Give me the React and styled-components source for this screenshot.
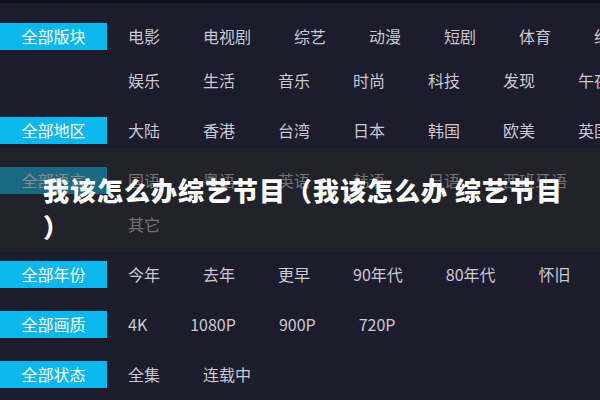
import React from 'react';
import styled, { createGlobalStyle } from 'styled-components';

const GlobalStyle = createGlobalStyle`
  html, body {
    margin: 0;
    padding: 0;
    background: #1c1c2c;
    overflow: hidden;
  }
  * {
    box-sizing: border-box;
  }
`;

const Page = styled.div`
  position: relative;
  width: 600px;
  height: 400px;
  overflow: hidden;
  background: #1c1c2c;
  border-top: 3px solid #10101b;
  padding-top: 20px;
  font-family: "Noto Sans CJK SC", "Noto Sans", sans-serif;
`;

const FilterRow = styled.div`
  display: flex;
  align-items: flex-start;
  margin-bottom: 23px;
`;

const Label = styled.div`
  flex-shrink: 0;
  width: 107px;
  height: 27px;
  line-height: 27px;
  background: #0bb8ee;
  color: #ffffff;
  font-size: 16px;
  text-align: center;
`;

const Lines = styled.div`
  display: flex;
  flex-direction: column;
  gap: 17px;
  margin-left: 21px;
`;

const Line = styled.div`
  display: flex;
  gap: 43px;
  white-space: nowrap;
`;

const Item = styled.a`
  color: #c9c9d3;
  font-size: 16px;
  line-height: 27px;
  text-decoration: none;
  cursor: pointer;
`;

const Band = styled.div`
  position: absolute;
  left: 0;
  right: 0;
  top: 145px;
  height: 104px;
  background: rgba(40, 40, 42, 0.55);
  padding: 24px 0 0 43px;
`;

const Title = styled.h1`
  width: 532px;
  margin: 0;
  color: #ffffff;
  font-size: 26px;
  font-weight: 900;
  line-height: 36px;
  letter-spacing: 1px;
  line-break: anywhere;
`;

const filters = [
  {
    label: '全部版块',
    lines: [
      ['电影', '电视剧', '综艺', '动漫', '短剧', '体育', '纪录片'],
      ['娱乐', '生活', '音乐', '时尚', '科技', '发现', '午夜'],
    ],
  },
  { label: '全部地区', lines: [['大陆', '香港', '台湾', '日本', '韩国', '欧美', '英国']] },
  {
    label: '全部语言',
    lines: [
      ['国语', '粤语', '英语', '韩语', '日语', '西班牙语', '法语'],
      ['其它'],
    ],
  },
  { label: '全部年份', lines: [['今年', '去年', '更早', '90年代', '80年代', '怀旧']] },
  { label: '全部画质', lines: [['4K', '1080P', '900P', '720P']] },
  { label: '全部状态', lines: [['全集', '连载中']] },
];

export default function App() {
  return (
    <>
      <GlobalStyle />
      <Page>
        {filters.map((f) => (
          <FilterRow key={f.label}>
            <Label>{f.label}</Label>
            <Lines>
              {f.lines.map((line, i) => (
                <Line key={i}>
                  {line.map((name) => (
                    <Item key={name}>{name}</Item>
                  ))}
                </Line>
              ))}
            </Lines>
          </FilterRow>
        ))}
        <Band>
          <Title>我该怎么办综艺节目（我该怎么办 综艺节目）</Title>
        </Band>
      </Page>
    </>
  );
}
